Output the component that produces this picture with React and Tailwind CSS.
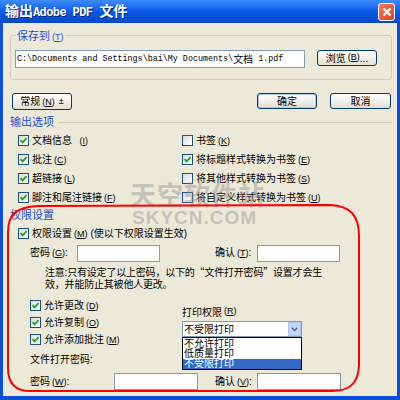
import React from 'react';

const cjk = "font-['Liberation_Sans','Noto_Sans_CJK_SC',sans-serif]";

const Key = ({ k }) => (
  <span className="ml-[2px] text-[9px]">(<span className="underline">{k}</span>)</span>
);

const Check = ({ on = true }) => (
  <span className="w-[11px] h-[11px] border border-[#1c5180] bg-linear-to-br from-[#dcdcd6] to-white flex items-center justify-center shrink-0">
    {on && (
      <svg width="9" height="9" viewBox="0 0 9 9">
        <path d="M1.5 4.2 L3.6 6.4 L7.6 2.2" fill="none" stroke="#21a121" strokeWidth="1.8" />
      </svg>
    )}
  </span>
);

const Opt = ({ on = true, label, k, className = '' }) => (
  <div className={`flex items-center gap-[3px] ${className}`}>
    <Check on={on} />
    <span className="whitespace-pre">{label}<Key k={k} /></span>
  </div>
);

const Btn = ({ children, className = '', def }) => (
  <div className={`rounded-[3px] border border-[#003c74] bg-linear-to-b from-white to-[#e3e0d2] flex items-center justify-center whitespace-nowrap ${def ? 'shadow-[inset_0_0_0_1px_#a9c4f3]' : ''} ${className}`}>
    {children}
  </div>
);

const Field = ({ className = '' }) => (
  <div className={`h-[17px] border border-[#7f9db9] bg-white ${className}`} />
);

const Q = ({ children }) => (
  <span className="font-['Noto_Sans_CJK_SC',sans-serif]">{children}</span>
);

export default function App() {
  return (
    <div className={`w-[400px] h-[400px] bg-[#0b4fd8] flex flex-col relative overflow-hidden text-[10px] text-black ${cjk}`}>
      {/* title bar */}
      <div className="h-[23px] flex items-center justify-between pl-[5px] pr-[5px] bg-linear-to-b from-[#3d8dfb] via-[#0a5ae8] to-[#0848c8]">
        <div className="text-white font-bold [text-shadow:1px_1px_0_#0a1f6b] flex items-baseline whitespace-nowrap">
          <span className="text-[14px]">输出</span>
          <span className="text-[12px] font-['Liberation_Mono',monospace] tracking-[-0.6px]">Adobe PDF</span>
          <span className="ml-[7px] text-[14px]">文件</span>
        </div>
        <div className="w-[17px] h-[18px] rounded-[3px] border border-white bg-linear-to-br from-[#ee7b5f] to-[#d8401c] flex items-center justify-center">
          <svg width="10" height="10" viewBox="0 0 10 10">
            <path d="M1.5 1.5 L8.5 8.5 M8.5 1.5 L1.5 8.5" stroke="white" strokeWidth="2.2" />
          </svg>
        </div>
      </div>

      {/* body */}
      <div className="mx-[3px] h-[373px] bg-[#ece9d8] flex flex-col">
        {/* save to */}
        <div className="relative mt-[12px] ml-[7px] w-[382px] h-[45px] border border-[#d0d0bf] rounded-[3px] flex items-start gap-[12px] pt-[14px] pl-[4px]">
          <span className="absolute -top-[8px] left-[5px] px-[1px] bg-[#ece9d8] text-[#1d4fd0] text-[11px]">
            保存到<Key k="T" />
          </span>
          <div className="w-[290px] h-[18px] border border-[#7f9db9] bg-white flex items-center pl-[1px] whitespace-pre overflow-hidden">
            <span className="font-['Liberation_Mono',monospace] text-[8.4px]">C:\Documents and Settings\bai\My Documents\</span>
            <span className="text-[10px]">文档</span>
            <span className="font-['Liberation_Mono',monospace] text-[8.4px]"> 1.pdf</span>
          </div>
          <Btn className="w-[60px] h-[16px]">浏览<Key k="B" />...</Btn>
        </div>

        {/* button row */}
        <div className="mt-[13px] flex items-start">
          <Btn className="ml-[9px] w-[60px] h-[17px] gap-[4px]">
            <span>常规<Key k="N" /></span>
            <span className="text-[9px]">±</span>
          </Btn>
          <Btn def className="ml-[185px] w-[60px] h-[16px]">确定</Btn>
          <Btn className="ml-[13px] w-[61px] h-[16px]">取消</Btn>
        </div>

        {/* output options */}
        <div className="mt-[5px] ml-[7px] mr-[5px] h-[14px] flex items-center gap-[4px]">
          <span className="text-[#1d4fd0] text-[11px] whitespace-nowrap">输出选项</span>
          <div className="flex-1 h-px bg-[#d0d0bf]" />
        </div>
        <div className="mt-[2px] ml-[15px] grid grid-cols-[164px_1fr] auto-rows-[19px] items-center">
          <Opt label="文档信息  " k="I" />
          <Opt on={false} label="书签" k="K" />
          <Opt label="批注" k="C" />
          <Opt label="将标题样式转换为书签" k="E" />
          <Opt label="超链接" k="L" />
          <Opt on={false} label="将其他样式转换为书签" k="S" />
          <Opt label="脚注和尾注链接" k="F" />
          <Opt on={false} label="将自定义样式转换为书签" k="U" />
        </div>

        {/* permissions */}
        <div className="mt-[1px] ml-[7px] h-[14px] flex items-center">
          <span className="text-[#1d4fd0] text-[11px] whitespace-nowrap">权限设置</span>
        </div>
        <div className="mt-[2px] ml-[15px] h-[19px] flex items-center">
          <Opt label="权限设置" k="M" />
          <span className="ml-[3px]">(使以下权限设置生效)</span>
        </div>
        <div className="mt-[1px] h-[18px] flex items-center">
          <span className="ml-[27px] w-[47px] whitespace-nowrap">密码<Key k="G" />:</span>
          <Field className="w-[83px]" />
          <span className="ml-[55px] w-[42px] whitespace-nowrap">确认<Key k="T" />:</span>
          <Field className="w-[83px]" />
        </div>
        <div className="mt-[4px] ml-[42px] leading-[12px] whitespace-nowrap tracking-[-0.2px]">
          注意:只有设定了以上密码，以下的<Q>“文件打开密码”</Q>设置才会生<br />
          效，并能防止其被他人更改。
        </div>

        <div className="mt-[6px] flex items-start">
          <div className="ml-[27px] w-[152px] flex flex-col">
            <Opt label="允许更改" k="D" className="h-[17px]" />
            <Opt label="允许复制" k="O" className="h-[17px]" />
            <Opt label="允许添加批注" k="M" className="h-[17px]" />
            <div className="mt-[4px] h-[14px] flex items-center">文件打开密码:</div>
          </div>
          <div className="flex flex-col">
            <div className="mt-[8px] h-[14px] flex items-center whitespace-nowrap">打印权限<Key k="R" /></div>
            <div className="mt-[2px] w-[120px] h-[16px] border border-[#7f9db9] bg-white flex items-center">
              <span className="flex-1 pl-[1px]">不受限打印</span>
              <div className="w-[13px] h-[14px] bg-[#c4d5fb] border border-[#b0c6f5] flex items-center justify-center">
                <svg width="7" height="5" viewBox="0 0 7 5">
                  <path d="M0.8 0.8 L3.5 3.6 L6.2 0.8" fill="none" stroke="#4d6185" strokeWidth="1.4" />
                </svg>
              </div>
            </div>
            <div className="w-[120px] h-[33px] border border-black bg-white flex flex-col leading-[10px] pt-[1px]">
              <span className="pl-[1px] h-[10px]">不允许打印</span>
              <span className="pl-[1px] h-[10px]">低质量打印</span>
              <span className="pl-[1px] h-[10px] bg-[#316ac5] text-white">不受限打印</span>
            </div>
          </div>
        </div>

        <div className="mt-[3px] h-[17px] flex items-center">
          <span className="ml-[27px] w-[84px] whitespace-nowrap">密码<Key k="W" />:</span>
          <Field className="w-[84px]" />
          <span className="ml-[17px] w-[42px] whitespace-nowrap">确认<Key k="V" />:</span>
          <Field className="w-[84px]" />
        </div>
      </div>

      {/* watermark */}
      <div className="absolute left-[130px] top-[181px] flex flex-col items-start pointer-events-none opacity-40">
        <span className="text-[26px] leading-[30px] font-bold text-[#8a8a8a] tracking-[1px]">天空软件站</span>
        <span className="-mt-[2px] ml-[2px] font-['Liberation_Sans',sans-serif] text-[19px] leading-[18px] font-bold text-[#8a8a8a] tracking-[1px]">SKYCN.COM</span>
      </div>

      {/* red annotation */}
      <svg className="absolute left-0 top-0 pointer-events-none" width="400" height="400" viewBox="0 0 400 400">
        <path
          d="M 8 232 C 8 214, 17 207, 38 206 L 330 205 C 350 206, 359 215, 359 236 L 359 366 C 358 383, 350 391, 332 391 L 30 391 C 15 391, 8 383, 8 368 Z"
          fill="none"
          stroke="#ff0000"
          strokeWidth="2"
        />
      </svg>
    </div>
  );
}
